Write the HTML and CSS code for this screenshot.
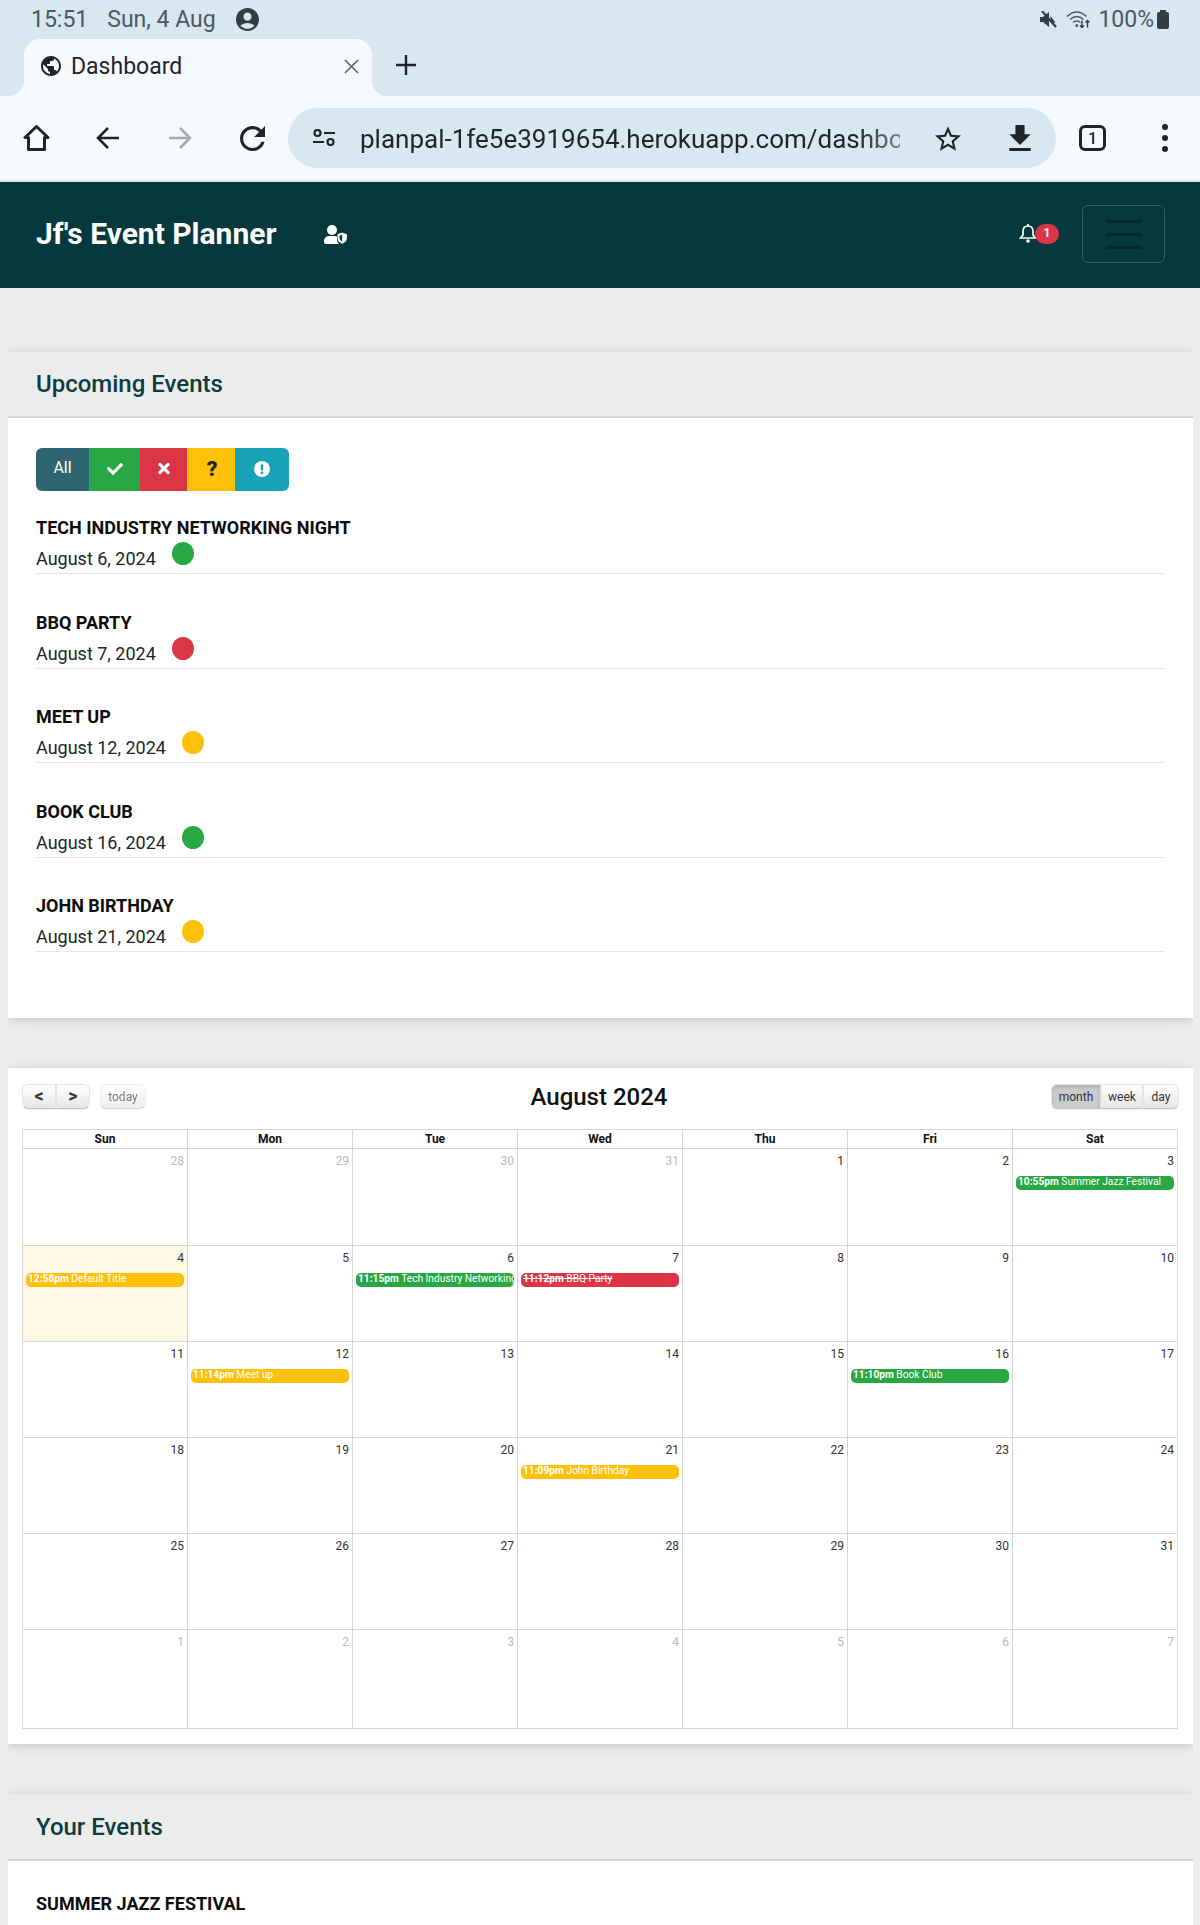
FILE: index.html
```html
<!DOCTYPE html>
<html lang="en">
<head>
  <meta charset="UTF-8" />
  <title>Dashboard</title>
  <link rel="stylesheet" href="styles.css">
</head>
<body>
  <div class="status-bar">
    <span class="status-time">15:51</span>
    <span class="status-date">Sun, 4 Aug</span>
    <svg class="status-account" viewBox="2 2 20 20"><path d="M12 2C6.48 2 2 6.48 2 12s4.48 10 10 10 10-4.48 10-10S17.52 2 12 2zm0 4c1.93 0 3.5 1.57 3.5 3.5S13.93 13 12 13s-3.5-1.57-3.5-3.5S10.07 6 12 6zm0 14c-2.03 0-4.43-.82-6.14-2.88C7.55 15.8 9.68 15 12 15s4.45.8 6.14 2.12C16.43 19.18 14.03 20 12 20z"/></svg>
    <div class="status-right">
      <svg class="status-mute" viewBox="0 0 18 17"><path d="M0 6v5h3l6 5V1L3 6z"/><path d="M10.500 5l5 6.500h-5z"/><path d="M2 0l14 16" stroke="#333d44" stroke-width="2.200"/></svg>
      <svg class="status-wifi" viewBox="0 0 25 17"><path d="M1 5.500c6.500-6 13-6 19.500 0M4 8.500c4.500-4 9-4 13.500 0M7 11.500c2.500-2 5-2 7.500 0" fill="none" stroke="#4a5963" stroke-width="1.500"/><circle cx="10.800" cy="14.500" r="1.500"/><path d="M16 9.500v7M14 14.500l2 2 2-2M21.500 16.500v-7M19.500 11.500l2-2 2 2" fill="none" stroke="#333d44" stroke-width="1.400"/></svg>
      <span class="status-battery-text">100%</span>
      <span class="status-battery"></span>
    </div>
  </div>

  <div class="tab-strip">
    <div class="tab">
      <svg class="tab-globe" viewBox="2 2 20 20"><path d="M12 2C6.48 2 2 6.48 2 12s4.48 10 10 10 10-4.48 10-10S17.52 2 12 2zm-1 17.930c-3.950-.49-7-3.850-7-7.930 0-.62.08-1.210.21-1.790L9 15v1c0 1.100.9 2 2 2v1.930zm6.900-2.540c-.26-.81-1-1.390-1.900-1.390h-1v-3c0-.55-.45-1-1-1H8v-2h2c.55 0 1-.45 1-1V7h2c1.100 0 2-.9 2-2v-.41c2.930 1.190 5 4.060 5 7.410 0 2.080-.8 3.970-2.100 5.390z"/></svg>
      <span class="tab-title">Dashboard</span>
      <svg class="tab-close" viewBox="0 0 16 16"><path d="M1 1l14 14M15 1L1 15"/></svg>
    </div>
    <svg class="tab-new" viewBox="0 0 20 20"><path d="M10 0v20M0 10h20"/></svg>
  </div>

  <div class="toolbar">
    <svg class="tool-icon tool-home" viewBox="0 0 27 27"><path d="M13.500 2L2 13h3.500v12h16V13H25z"/></svg>
    <svg class="tool-icon tool-back" viewBox="0 0 24 24"><path d="M23 12H2M12 2L2 12l10 10"/></svg>
    <svg class="tool-icon tool-forward" viewBox="0 0 24 24"><path d="M1 12h21M12 2l10 10-10 10"/></svg>
    <svg class="tool-reload" viewBox="4 4 16 16"><path d="M17.650 6.350C16.200 4.900 14.210 4 12 4c-4.420 0-7.990 3.580-7.990 8s3.570 8 7.990 8c3.730 0 6.840-2.550 7.730-6h-2.080c-.82 2.330-3.040 4-5.650 4-3.310 0-6-2.690-6-6s2.690-6 6-6c1.660 0 3.140.69 4.220 1.780L13 11h7V4l-2.350 2.350z"/></svg>
    <div class="url-bar">
      <svg class="url-tune" viewBox="0 0 22 18"><circle cx="4.500" cy="4" r="3"/><path d="M11 4h11M0 13h11"/><circle cx="17.500" cy="13" r="3"/></svg>
      <span class="url-text">planpal-1fe5e3919654.herokuapp.com/dashbo</span>
      <svg class="url-star" viewBox="2 2 20 19"><path d="M22 9.240l-7.190-.62L12 2 9.190 8.630 2 9.240l5.460 4.730L5.820 21 12 17.270 18.180 21l-1.630-7.030L22 9.240zM12 15.400l-3.760 2.270 1-4.280-3.320-2.880 4.380-.38L12 6.100l1.710 4.040 4.380.38-3.320 2.880 1 4.280L12 15.400z"/></svg>
      <svg class="url-download" viewBox="5 3 14 17"><path d="M19 9h-4V3H9v6H5l7 7 7-7zM5 18v2h14v-2H5z"/></svg>
    </div>
    <span class="tab-count">1</span>
    <div class="tool-menu"><i></i><i></i><i></i></div>
  </div>

  <nav class="navbar">
    <a class="brand">Jf's Event Planner</a>
    <svg class="nav-user" viewBox="0 0 23 19"><circle cx="8" cy="5" r="5"/><path d="M0 16c0-3 2.500-5 5.500-5h5c1 0 1.800.2 2.500.5V14c0 2 .8 3.700 2 5H2c-1.200 0-2-.8-2-2z"/><path d="M13.500 9.300l4.700-1.800 4.700 1.800v4c0 2.800-2.200 4.400-4.700 5.500-2.500-1.100-4.700-2.700-4.700-5.500z"/><path d="M18.200 9.800v6.600c-1.400-.7-2.700-1.700-2.700-3.400v-2.200z" fill="#06393e"/></svg>
    <div class="nav-right">
      <div class="nav-bell">
        <svg viewBox="0 0 18 20"><path d="M9 3c-3.500 0-5 2.500-5 5.500V12l-2.500 3h15L14 12V8.500C14 5.500 12.500 3 9 3z"/><path d="M9 1v2"/><circle class="bell-dot" cx="9" cy="18" r="1.800"/></svg>
        <span class="nav-badge">1</span>
      </div>
      <button class="nav-toggler"><i></i><i></i><i></i></button>
    </div>
  </nav>

  <main class="content">
    <section class="card">
      <h2 class="card-header">Upcoming Events</h2>
      <div class="card-body upcoming">
        <div class="filter-group">
          <span class="filter filter-all">All</span>
          <span class="filter filter-yes"><svg viewBox="0 0 512 512"><path d="M173.900 439.400L7.500 273c-10-10-10-26.200 0-36.200l36.200-36.200c10-10 26.200-10 36.200 0L192 312.700 432.100 72.600c10-10 26.200-10 36.200 0l36.200 36.200c10 10 10 26.200 0 36.200L210.100 439.400c-10 10-26.200 10-36.200 0z"/></svg></span>
          <span class="filter filter-no"><svg viewBox="0 0 352 512"><path d="M242.700 256l100.100-100.100c12.300-12.300 12.300-32.200 0-44.500l-22.200-22.200c-12.300-12.300-32.200-12.300-44.500 0L176 189.300 75.900 89.200c-12.300-12.300-32.200-12.300-44.500 0L9.200 111.400c-12.300 12.300-12.300 32.200 0 44.500L109.300 256 9.200 356.100c-12.300 12.300-12.300 32.200 0 44.500l22.200 22.200c12.300 12.300 32.200 12.300 44.500 0L176 322.700l100.100 100.100c12.300 12.300 32.200 12.300 44.500 0l22.200-22.200c12.300-12.300 12.300-32.200 0-44.500L242.700 256z"/></svg></span>
          <span class="filter filter-maybe">?</span>
          <span class="filter filter-info"><svg viewBox="0 0 20 20"><circle cx="10" cy="10" r="10"/><rect class="info-mark" x="8.500" y="4" width="3" height="8" rx="1.200"/><circle class="info-mark" cx="10" cy="14.800" r="1.700"/></svg></span>
        </div>
        <ul class="event-list">
          <li class="event-row">
            <h3>TECH INDUSTRY NETWORKING NIGHT</h3>
            <div class="event-date">August 6, 2024 <span class="dot dot-green"></span></div>
          </li>
          <li class="event-row">
            <h3>BBQ PARTY</h3>
            <div class="event-date">August 7, 2024 <span class="dot dot-red"></span></div>
          </li>
          <li class="event-row">
            <h3>MEET UP</h3>
            <div class="event-date">August 12, 2024 <span class="dot dot-yellow"></span></div>
          </li>
          <li class="event-row">
            <h3>BOOK CLUB</h3>
            <div class="event-date">August 16, 2024 <span class="dot dot-green"></span></div>
          </li>
          <li class="event-row">
            <h3>JOHN BIRTHDAY</h3>
            <div class="event-date">August 21, 2024 <span class="dot dot-yellow"></span></div>
          </li>
        </ul>
      </div>
    </section>

    <section class="card calendar-card">
      <div class="cal-toolbar">
        <div class="cal-left">
          <div class="cal-group">
            <button class="cal-btn cal-arrow">&lt;</button>
            <button class="cal-btn cal-arrow">&gt;</button>
          </div>
          <button class="cal-btn cal-today">today</button>
        </div>
        <h2 class="cal-title">August 2024</h2>
        <div class="cal-group cal-views">
          <button class="cal-btn cal-view active">month</button>
          <button class="cal-btn cal-view">week</button>
          <button class="cal-btn cal-view">day</button>
        </div>
      </div>
      <table class="cal-table">
        <thead>
          <tr><th>Sun</th><th>Mon</th><th>Tue</th><th>Wed</th><th>Thu</th><th>Fri</th><th>Sat</th></tr>
        </thead>
        <tbody>
          <tr class="cal-first">
            <td class="other">28</td><td class="other">29</td><td class="other">30</td><td class="other">31</td><td>1</td><td>2</td>
            <td>3<div class="cal-event ev-green"><b>10:55pm</b> Summer Jazz Festival</div></td>
          </tr>
          <tr>
            <td class="today">4<div class="cal-event ev-yellow"><b>12:58pm</b> Default Title</div></td>
            <td>5</td>
            <td>6<div class="cal-event ev-green"><b>11:15pm</b> Tech Industry Networking</div></td>
            <td>7<div class="cal-event ev-red"><b>11:12pm</b> BBQ Party</div></td>
            <td>8</td><td>9</td><td>10</td>
          </tr>
          <tr>
            <td>11</td>
            <td>12<div class="cal-event ev-yellow"><b>11:14pm</b> Meet up</div></td>
            <td>13</td><td>14</td><td>15</td>
            <td>16<div class="cal-event ev-green"><b>11:10pm</b> Book Club</div></td>
            <td>17</td>
          </tr>
          <tr>
            <td>18</td><td>19</td><td>20</td>
            <td>21<div class="cal-event ev-yellow"><b>11:09pm</b> John Birthday</div></td>
            <td>22</td><td>23</td><td>24</td>
          </tr>
          <tr>
            <td>25</td><td>26</td><td>27</td><td>28</td><td>29</td><td>30</td><td>31</td>
          </tr>
          <tr class="cal-last">
            <td class="other">1</td><td class="other">2</td><td class="other">3</td><td class="other">4</td><td class="other">5</td><td class="other">6</td><td class="other">7</td>
          </tr>
        </tbody>
      </table>
    </section>

    <section class="card">
      <h2 class="card-header your-header">Your Events</h2>
      <div class="card-body your-events">
        <h3>SUMMER JAZZ FESTIVAL</h3>
      </div>
    </section>
  </main>
</body>
</html>
```

FILE: styles.css
```css
* {
  margin: 0;
  padding: 0;
  box-sizing: border-box;
  font-family: Roboto, sans-serif;
}

html, body {
  height: 1925px;
  overflow: hidden;
}

body {
  background: #efeeee;
  color: #212529;
}

svg {
  display: block;
  flex: none;
}

/* Browser chrome */
.status-bar {
  height: 39px;
  background: #d9e7f1;
  display: flex;
  align-items: center;
  padding: 0 31px;
  color: #4a5963;
  font-size: 23px;
}

.status-date {
  margin-left: 19px;
}

.status-account {
  width: 23px;
  height: 23px;
  margin-left: 20px;
  fill: #333d44;
}

.status-right {
  margin-left: auto;
  display: flex;
  align-items: center;
}

.status-mute {
  width: 18px;
  height: 17px;
  fill: #333d44;
}

.status-wifi {
  width: 25px;
  height: 17px;
  margin-left: 8px;
  fill: #4a5963;
}

.status-battery-text {
  margin-left: 7px;
}

.status-battery {
  width: 12px;
  height: 17px;
  margin-top: 2px;
  background: #333d44;
  border-radius: 2px;
  margin-left: 3px;
  position: relative;
}

.status-battery::before {
  content: "";
  position: absolute;
  left: 3px;
  top: -2px;
  width: 6px;
  height: 2px;
  background: #333d44;
}

.tab-strip {
  height: 57px;
  background: #d9e7f1;
  display: flex;
  align-items: flex-end;
  padding-left: 24px;
}

.tab {
  width: 348px;
  height: 57px;
  background: #f6faff;
  border-radius: 16px 16px 0 0;
  display: flex;
  align-items: center;
  padding: 0 13px 3px 17px;
  position: relative;
}

.tab::before,
.tab::after {
  content: "";
  position: absolute;
  bottom: 0;
  width: 16px;
  height: 16px;
}

.tab::before {
  left: -16px;
  background: radial-gradient(circle at 0 0, transparent 16px, #f6faff 16.5px);
}

.tab::after {
  right: -16px;
  background: radial-gradient(circle at 100% 0, transparent 16px, #f6faff 16.5px);
}

.tab-globe {
  width: 20px;
  height: 20px;
  fill: #1f2428;
}

.tab-title {
  margin-left: 10px;
  font-size: 23px;
  color: #1f2428;
}

.tab-close {
  margin-left: auto;
  width: 15px;
  height: 15px;
  stroke: #5a6065;
  stroke-width: 1.600;
}

.tab-new {
  width: 20px;
  height: 20px;
  margin: 0 0 21px 24px;
  stroke: #1f2428;
  stroke-width: 2.400;
}

.toolbar {
  height: 86px;
  background: #f6faff;
  border-bottom: 2px solid #dfe7ee;
  display: flex;
  align-items: center;
  padding: 0 0 0 23px;
}

.tool-icon {
  fill: none;
  stroke: #1f2428;
  stroke-width: 2.600;
}

.tool-home {
  width: 27px;
  height: 28px;
  stroke-width: 3;
  stroke-linejoin: round;
}

.tool-back {
  width: 24px;
  height: 24px;
  margin-left: 46px;
}

.tool-forward {
  width: 24px;
  height: 24px;
  margin-left: 48px;
  stroke: #a3aaaf;
}

.tool-reload {
  width: 25px;
  height: 25px;
  margin-left: 48px;
  fill: #1f2428;
}

.url-bar {
  width: 768px;
  height: 60px;
  margin-left: 23px;
  background: #d9e7f1;
  border-radius: 30px;
  display: flex;
  align-items: center;
  padding-left: 25px;
}

.url-tune {
  width: 22px;
  height: 18px;
  fill: none;
  stroke: #1f2428;
  stroke-width: 2.200;
}

.url-text {
  width: 540px;
  margin-left: 25px;
  padding-top: 2px;
  font-size: 26px;
  color: #1f2428;
  white-space: nowrap;
  overflow: hidden;
  -webkit-mask-image: linear-gradient(90deg, #000 92%, rgba(0, 0, 0, 0.5));
  mask-image: linear-gradient(90deg, #000 92%, rgba(0, 0, 0, 0.5));
}

.url-star {
  width: 26px;
  height: 25px;
  margin-left: 35px;
  fill: #1f2428;
}

.url-download {
  width: 22px;
  height: 26px;
  margin-left: 48px;
  fill: #1f2428;
}

.tab-count {
  width: 27px;
  height: 26px;
  margin-left: 23px;
  border: 3px solid #1f2428;
  border-radius: 6px;
  font-size: 16px;
  font-weight: 500;
  color: #1f2428;
  display: flex;
  align-items: center;
  justify-content: center;
}

.tool-menu {
  margin-left: 56px;
  display: flex;
  flex-direction: column;
  gap: 5px;
}

.tool-menu i {
  width: 6px;
  height: 6px;
  border-radius: 50%;
  background: #1f2428;
}

/* Navbar */
.navbar {
  height: 106px;
  background: #06393e;
  display: flex;
  align-items: center;
  padding: 0 35px 2px 36px;
}

.brand {
  color: #fff;
  font-size: 30px;
  font-weight: 700;
  padding-bottom: 1px;
}

.nav-user {
  width: 23px;
  height: 19px;
  margin-left: 48px;
  fill: #fff;
}

.nav-right {
  margin-left: auto;
  display: flex;
  align-items: center;
}

.nav-bell {
  position: relative;
  width: 40px;
  height: 22px;
}

.nav-bell svg {
  width: 18px;
  height: 20px;
  fill: none;
  stroke: #fff;
  stroke-width: 1.700;
}

.bell-dot {
  fill: #fff;
  stroke: none;
}

.nav-badge {
  position: absolute;
  left: 16px;
  top: 1px;
  width: 24px;
  height: 20px;
  background: #dc3545;
  border-radius: 10px;
  color: #fff;
  font-size: 12px;
  font-weight: 700;
  text-align: center;
  line-height: 19px;
}

.nav-toggler {
  width: 83px;
  height: 58px;
  margin-left: 23px;
  background: transparent;
  border: 1px solid #2f5f64;
  border-radius: 6px;
  display: flex;
  flex-direction: column;
  align-items: center;
  justify-content: center;
  gap: 10px;
}

.nav-toggler i {
  width: 36px;
  height: 3px;
  background: #04272b;
}

/* Cards */
.content {
  padding: 64px 7px 0 8px;
  display: flex;
  flex-direction: column;
  gap: 50px;
}

.card {
  background: #fff;
  box-shadow: 0 2px 8px rgba(0, 0, 0, 0.14), 0 0 26px rgba(0, 0, 0, 0.05);
  clip-path: inset(-40px 0);
}

.card-header {
  height: 66px;
  background: #ececec;
  border-bottom: 2px solid #d6d6d6;
  padding: 0 28px;
  display: flex;
  align-items: center;
  color: #0b3d42;
  font-size: 24px;
  font-weight: 500;
}

.your-header {
  height: 67px;
  padding-top: 1px;
}

.card-body {
  padding: 30px 28px 0;
}

.upcoming {
  height: 600px;
}

.filter-group {
  display: flex;
  width: 253px;
  height: 43px;
  border-radius: 6px;
  overflow: hidden;
}

.filter {
  display: flex;
  align-items: center;
  justify-content: center;
  color: #fff;
  padding-bottom: 2px;
}

.filter svg {
  fill: #fff;
}

.filter-all {
  width: 53px;
  background: #2f6570;
  font-size: 16px;
  padding-bottom: 5px;
}

.filter-yes {
  width: 51px;
  background: #28a745;
}

.filter-yes svg {
  width: 16px;
  height: 16px;
}

.filter-no {
  width: 47px;
  background: #dc3545;
}

.filter-no svg {
  width: 12px;
  height: 17px;
}

.filter-maybe {
  width: 48px;
  background: #ffc107;
  color: #212529;
  font-size: 21px;
  font-weight: 900;
  padding-left: 2px;
}

.filter-info {
  width: 54px;
  background: #17a2b8;
}

.filter-info svg {
  width: 16px;
  height: 16px;
}

.info-mark {
  fill: #17a2b8;
}

.event-list {
  list-style: none;
  margin-top: 25px;
}

.event-row {
  height: 94.500px;
  position: relative;
}

.event-row h3,
.your-events h3 {
  font-size: 18px;
  font-weight: 700;
  line-height: 24px;
  color: #0d0d0d;
}

.event-date {
  margin-top: 5px;
  font-size: 18px;
  line-height: 27px;
  padding-bottom: 1px;
  border-bottom: 1px solid #e6e6e6;
  color: #212529;
  display: flex;
}

.dot {
  width: 22px;
  height: 23px;
  margin-left: 16px;
  margin-top: -3px;
  border-radius: 50%;
}

.dot-green {
  background: #28a745;
}

.dot-red {
  background: #dc3545;
}

.dot-yellow {
  background: #ffc107;
}

.your-events {
  padding-top: 31px;
  height: 200px;
}

/* Calendar */
.calendar-card {
  padding: 16px 14px 15px;
}

.cal-toolbar {
  height: 25px;
  display: flex;
  justify-content: space-between;
  align-items: center;
  margin-bottom: 20px;
  position: relative;
}

.cal-left {
  display: flex;
  gap: 10px;
}

.cal-group {
  display: flex;
}

.cal-btn {
  height: 25px;
  background: linear-gradient(#fff, #e6e6e6);
  border: 1px solid #e6e6e6;
  border-bottom-color: #bfbfbf;
  color: #333;
  font-size: 12px;
  box-shadow: inset 0 1px 0 rgba(255, 255, 255, 0.2), 0 1px 2px rgba(0, 0, 0, 0.05);
  border-radius: 0;
}

.cal-group .cal-btn:first-child {
  border-radius: 6px 0 0 6px;
}

.cal-group .cal-btn:last-child {
  border-radius: 0 6px 6px 0;
}

.cal-arrow {
  width: 34px;
  font-size: 18px;
  font-weight: 700;
  padding-bottom: 5px;
}

.cal-today {
  width: 46px;
  border-radius: 6px;
  opacity: 0.65;
}

.cal-title {
  position: absolute;
  left: 0;
  right: 3px;
  text-align: center;
  font-size: 24px;
  font-weight: 500;
  color: #111;
  pointer-events: none;
}

.cal-view {
  width: 42px;
}

.cal-view.active {
  width: 50px;
  background: #ccc;
  box-shadow: inset 0 2px 4px rgba(0, 0, 0, 0.15), 0 1px 2px rgba(0, 0, 0, 0.05);
}

.cal-views .cal-view:last-child {
  width: 36px;
}

.cal-table {
  width: 1156px;
  table-layout: fixed;
  border-collapse: collapse;
  font-size: 12px;
}

.cal-table th,
.cal-table td {
  border: 1px solid #d6d6d6;
}

.cal-table th {
  height: 19px;
  font-size: 12px;
  font-weight: 700;
  color: #111;
  text-align: center;
}

.cal-table td {
  height: 96px;
  vertical-align: top;
  text-align: right;
  padding: 5px 3px 0;
  line-height: 15px;
  color: #333;
}

.cal-table .cal-first td {
  height: 97px;
}

.cal-table .cal-last td {
  height: 99px;
}

.cal-table td.other {
  color: #bbb;
}

.cal-table td.today {
  background: #fcf8e3;
}

.cal-event {
  height: 14px;
  margin-top: 7px;
  border-radius: 5px;
  color: #fff;
  font-size: 10.200px;
  line-height: 12px;
  padding-left: 2px;
  text-align: left;
  white-space: nowrap;
  overflow: hidden;
}

.ev-green {
  background: #28a745;
}

.ev-yellow {
  background: #ffc107;
}

.ev-red {
  background: #dc3545;
  text-decoration: line-through;
}
```
